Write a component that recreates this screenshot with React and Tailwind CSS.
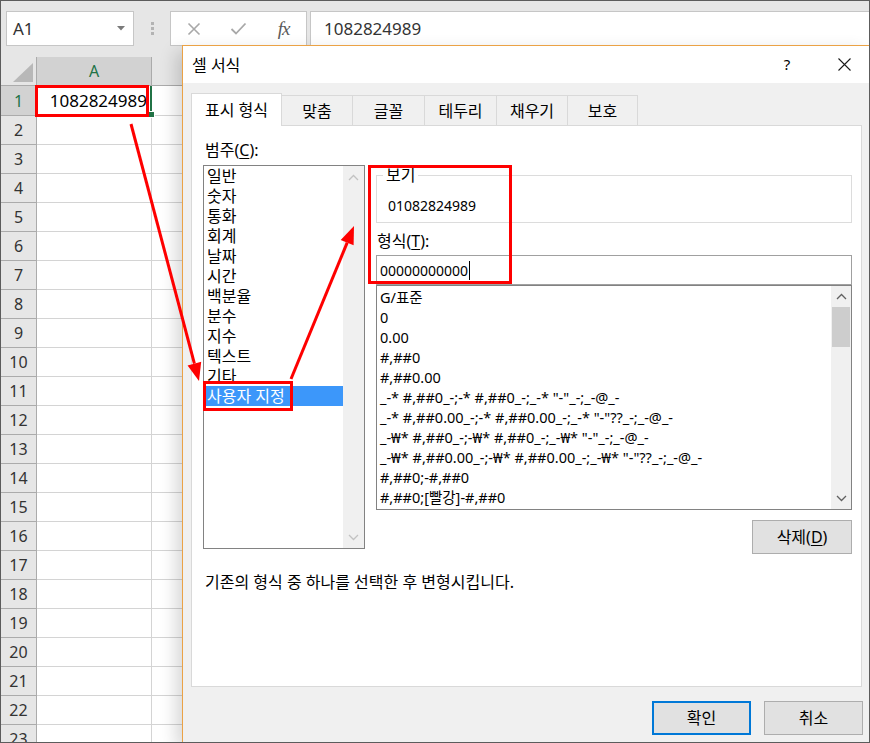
import React from "react";

const rows = Array.from({ length: 23 }, (_, i) => i + 1);
const categories = ["일반", "숫자", "통화", "회계", "날짜", "시간", "백분율", "분수", "지수", "텍스트", "기타", "사용자 지정"];
const formats = [
  "G/표준",
  "0",
  "0.00",
  "#,##0",
  "#,##0.00",
  '_-* #,##0_-;-* #,##0_-;_-* "-"_-;_-@_-',
  '_-* #,##0.00_-;-* #,##0.00_-;_-* "-"??_-;_-@_-',
  '_-₩* #,##0_-;-₩* #,##0_-;_-₩* "-"_-;_-@_-',
  '_-₩* #,##0.00_-;-₩* #,##0.00_-;_-₩* "-"??_-;_-@_-',
  "#,##0;-#,##0",
  "#,##0;[빨강]-#,##0",
];
const tabs = [
  ["맞춤", "w-[71px]"],
  ["글꼴", "w-[72px]"],
  ["테두리", "w-[72px]"],
  ["채우기", "w-[71px]"],
  ["보호", "w-[70px]"],
];

function Chevron({ up, color }) {
  return (
    <svg width="11" height="7" viewBox="0 0 11 7">
      <polyline
        points={up ? "1,6 5.5,1.5 10,6" : "1,1 5.5,5.5 10,1"}
        fill="none"
        stroke={color}
        strokeWidth="1.3"
      />
    </svg>
  );
}

export default function App() {
  return (
    <div className="relative w-[870px] h-[743px] overflow-hidden border border-[#5c5c5c] bg-[#e6e6e6] text-black font-['Noto_Sans','Noto_Sans_CJK_KR',sans-serif]">
      {/* Toolbar */}
      <div className="h-[56px] flex items-start pt-[10px] pl-[5px]">
        <div className="w-[128px] h-[35px] shrink-0 bg-white border border-[#c6c6c6] flex items-center justify-between pl-[6px] pr-[8px]">
          <span className="text-[17px] leading-none text-[#333]">A1</span>
          <svg width="8" height="5" viewBox="0 0 8 5">
            <polygon points="0,0 8,0 4,4.5" fill="#7a7a7a" />
          </svg>
        </div>
        <div className="w-[36px] h-[35px] shrink-0 flex flex-col items-center justify-center gap-[2px]">
          <span className="block w-[3px] h-[3px] bg-[#b3b3b3]" />
          <span className="block w-[3px] h-[3px] bg-[#b3b3b3]" />
          <span className="block w-[3px] h-[3px] bg-[#b3b3b3]" />
        </div>
        <div className="w-[137px] h-[35px] shrink-0 bg-white border border-[#c6c6c6] flex items-center">
          <div className="w-[45px] flex justify-center">
            <svg width="14" height="14" viewBox="0 0 14 14">
              <path d="M1.5 1.5 L12.5 12.5 M12.5 1.5 L1.5 12.5" stroke="#a8a8a8" strokeWidth="1.6" fill="none" />
            </svg>
          </div>
          <div className="w-[45px] flex justify-center">
            <svg width="17" height="13" viewBox="0 0 17 13">
              <path d="M1.5 7 L6 11.5 L15.5 1.5" stroke="#a8a8a8" strokeWidth="1.8" fill="none" />
            </svg>
          </div>
          <div className="w-[45px] flex justify-center">
            <span className="font-['Liberation_Serif',serif] italic text-[19px] leading-none text-[#5a5a5a] tracking-[-1px]">fx</span>
          </div>
        </div>
        <div className="ml-[3px] flex-1 h-[35px] bg-white border border-[#c6c6c6] border-r-0 pl-[13px] flex items-center text-[17px] text-[#333]">
          1082824989
        </div>
      </div>

      {/* Column headers */}
      <div className="flex h-[29px]">
        <div className="w-[36px] shrink-0 border-r border-b border-[#ababab] bg-[#e6e6e6] flex items-end justify-end pr-[3px] pb-[3px]">
          <svg width="20" height="19" viewBox="0 0 20 19">
            <polygon points="0,19 20,19 20,0" fill="#b8b8b8" />
          </svg>
        </div>
        <div className="w-[115px] shrink-0 border-r border-b border-[#ababab] bg-[#d2d2d2] flex items-center justify-center text-[16px] text-[#217346]">
          A
        </div>
        <div className="flex-1 border-b border-[#ababab] bg-[#e6e6e6]" />
      </div>

      {/* Rows */}
      {rows.map((n) => (
        <div key={n} className={n === 1 ? "flex h-[30px]" : "flex h-[29px]"}>
          <div
            className={
              n === 1
                ? "w-[36px] shrink-0 border-r border-b border-[#ababab] bg-[#d2d2d2] flex items-center justify-center text-[16px] text-[#217346]"
                : "w-[36px] shrink-0 border-r border-b border-[#ababab] bg-[#e6e6e6] flex items-center justify-center text-[16px] text-[#333]"
            }
          >
            {n}
          </div>
          <div className="w-[115px] shrink-0 border-r border-b border-[#d4d4d4] bg-white flex items-center justify-end pr-[4px] text-[17px]">
            {n === 1 ? "1082824989" : ""}
          </div>
          <div className="flex-1 border-b border-[#d4d4d4] bg-white" />
        </div>
      ))}

      {/* Dialog */}
      <div className="absolute left-[181px] top-[44px] w-[687px] bottom-0 border-l border-t border-[#eba245] bg-[#f0f0f0] shadow-[-6px_6px_16px_rgba(0,0,0,0.16)] flex flex-col">
        <div className="h-[37px] shrink-0 bg-white flex items-center pl-[9px] pr-[2px] text-[16px]">
          <span>셀 서식</span>
          <span className="ml-auto w-[20px] text-center text-[15px]">?</span>
          <div className="ml-[24px] w-[46px] flex justify-center">
            <svg width="13" height="13" viewBox="0 0 13 13">
              <path d="M0.5 0.5 L12.5 12.5 M12.5 0.5 L0.5 12.5" stroke="#1a1a1a" strokeWidth="1.1" fill="none" />
            </svg>
          </div>
        </div>

        <div className="flex-1 pt-[10px] pl-[8px]">
          {/* Tabs */}
          <div className="flex items-end h-[32px]">
            <div className="relative z-10 w-[91px] h-[33px] mb-[-1px] bg-white border border-b-0 border-[#d9d9d9] flex items-center justify-center text-[16px] pb-[1px]">
              표시 형식
            </div>
            {tabs.map(([t, w]) => (
              <div key={t} className={`${w} h-[30px] border border-l-0 border-b-0 border-[#d9d9d9] bg-[#f0f0f0] flex items-center justify-center text-[16px]`}>
                {t}
              </div>
            ))}
          </div>

          {/* Panel */}
          <div className="w-[671px] h-[562px] border border-[#d9d9d9] bg-white pt-[14px] pl-[11px] flex flex-col">
            <div className="flex items-start">
              {/* Left column */}
              <div className="w-[162px] shrink-0">
                <div className="ml-[2px] h-[20px] leading-[20px] text-[16px]">
                  범주(<span className="underline underline-offset-2">C</span>):
                </div>
                <div className="mt-[5px] h-[384px] border border-[#828282] flex">
                  <div className="flex-1">
                    {categories.map((c, i) => (
                      <div
                        key={c}
                        className={
                          i === 11
                            ? "h-[20px] leading-[20px] pl-[3px] text-[16px] bg-[#3c97fa] text-white"
                            : "h-[20px] leading-[20px] pl-[3px] text-[16px]"
                        }
                      >
                        {c}
                      </div>
                    ))}
                  </div>
                  <div className="w-[21px] bg-[#f0f0f0] flex flex-col justify-between">
                    <div className="h-[22px] flex items-center justify-center">
                      <Chevron up color="#c2c2c2" />
                    </div>
                    <div className="h-[22px] flex items-center justify-center">
                      <Chevron color="#c2c2c2" />
                    </div>
                  </div>
                </div>
              </div>

              {/* Right column */}
              <div className="ml-[11px] w-[476px] pt-[35px] flex flex-col">
                <div className="relative h-[48px] border border-[#dcdcdc] pl-[11px] pt-[20px]">
                  <span className="absolute left-[6px] top-[-11px] bg-white px-[3px] leading-[20px] text-[16px]">보기</span>
                  <div className="leading-[20px] text-[14px]">01082824989</div>
                </div>
                <div className="mt-[8px] h-[20px] leading-[20px] text-[16px] ml-[1px]">
                  형식(<span className="underline underline-offset-2">T</span>):
                </div>
                <div className="mt-[4px] h-[30px] border border-[#a0a0a0] flex items-center pl-[3px] text-[14px]">
                  00000000000
                  <span className="inline-block w-[1px] h-[19px] bg-black ml-[1px]" />
                </div>
                <div className="h-[225px] border border-[#828282] flex">
                  <div className="flex-1 pt-[1px]">
                    {formats.map((f) => (
                      <div key={f} className="h-[20px] leading-[20px] pl-[3px] text-[14.5px] whitespace-pre">
                        {f}
                      </div>
                    ))}
                  </div>
                  <div className="w-[20px] bg-[#f0f0f0] flex flex-col">
                    <div className="h-[21px] flex items-center justify-center">
                      <Chevron up color="#606060" />
                    </div>
                    <div className="h-[40px] mx-[1px] bg-[#cdcdcd]" />
                    <div className="flex-1" />
                    <div className="h-[21px] flex items-center justify-center">
                      <Chevron color="#606060" />
                    </div>
                  </div>
                </div>
                <div className="mt-[10px] flex justify-end">
                  <div className="w-[100px] h-[34px] bg-[#e1e1e1] border border-[#adadad] flex items-center justify-center text-[16px]">
                    삭제(<span className="underline underline-offset-2">D</span>)
                  </div>
                </div>
              </div>
            </div>
            <div className="mt-[18px] ml-[2px] h-[20px] leading-[20px] text-[16px]">
              기존의 형식 중 하나를 선택한 후 변형시킵니다.
            </div>
          </div>

          {/* Buttons */}
          <div className="w-[671px] mt-[14px] flex justify-end gap-[13px]">
            <div className="w-[99px] h-[34px] bg-[#e1e1e1] border-2 border-[#0078d7] flex items-center justify-center text-[16px]">
              확인
            </div>
            <div className="w-[99px] h-[34px] bg-[#e1e1e1] border border-[#adadad] flex items-center justify-center text-[16px] mr-[-1px]">
              취소
            </div>
          </div>
        </div>
      </div>

      {/* Annotation overlay */}
      <svg className="absolute left-[-1px] top-[-1px] pointer-events-none" width="870" height="743" viewBox="0 0 870 743">
        <rect x="150" y="86" width="2" height="29" fill="#217346" />
        <rect x="148.5" y="111.5" width="6" height="6" fill="#217346" stroke="#ffffff" strokeWidth="1" />
        <rect x="36.5" y="86.5" width="111" height="29" fill="none" stroke="#fe0000" strokeWidth="3" />
        <rect x="204.5" y="382.5" width="87" height="27" fill="none" stroke="#fe0000" strokeWidth="3" />
        <rect x="369.5" y="166.5" width="141" height="116" fill="none" stroke="#fe0000" strokeWidth="3" />
        <line x1="131" y1="124" x2="194.4" y2="363.6" stroke="#fe0000" strokeWidth="3" />
        <polygon points="199,381 187.6,365.4 201.2,361.8" fill="#fe0000" />
        <line x1="291" y1="379" x2="347.2" y2="242.6" stroke="#fe0000" strokeWidth="3" />
        <polygon points="354,226 353.6,245.3 340.7,240" fill="#fe0000" />
      </svg>
    </div>
  );
}
